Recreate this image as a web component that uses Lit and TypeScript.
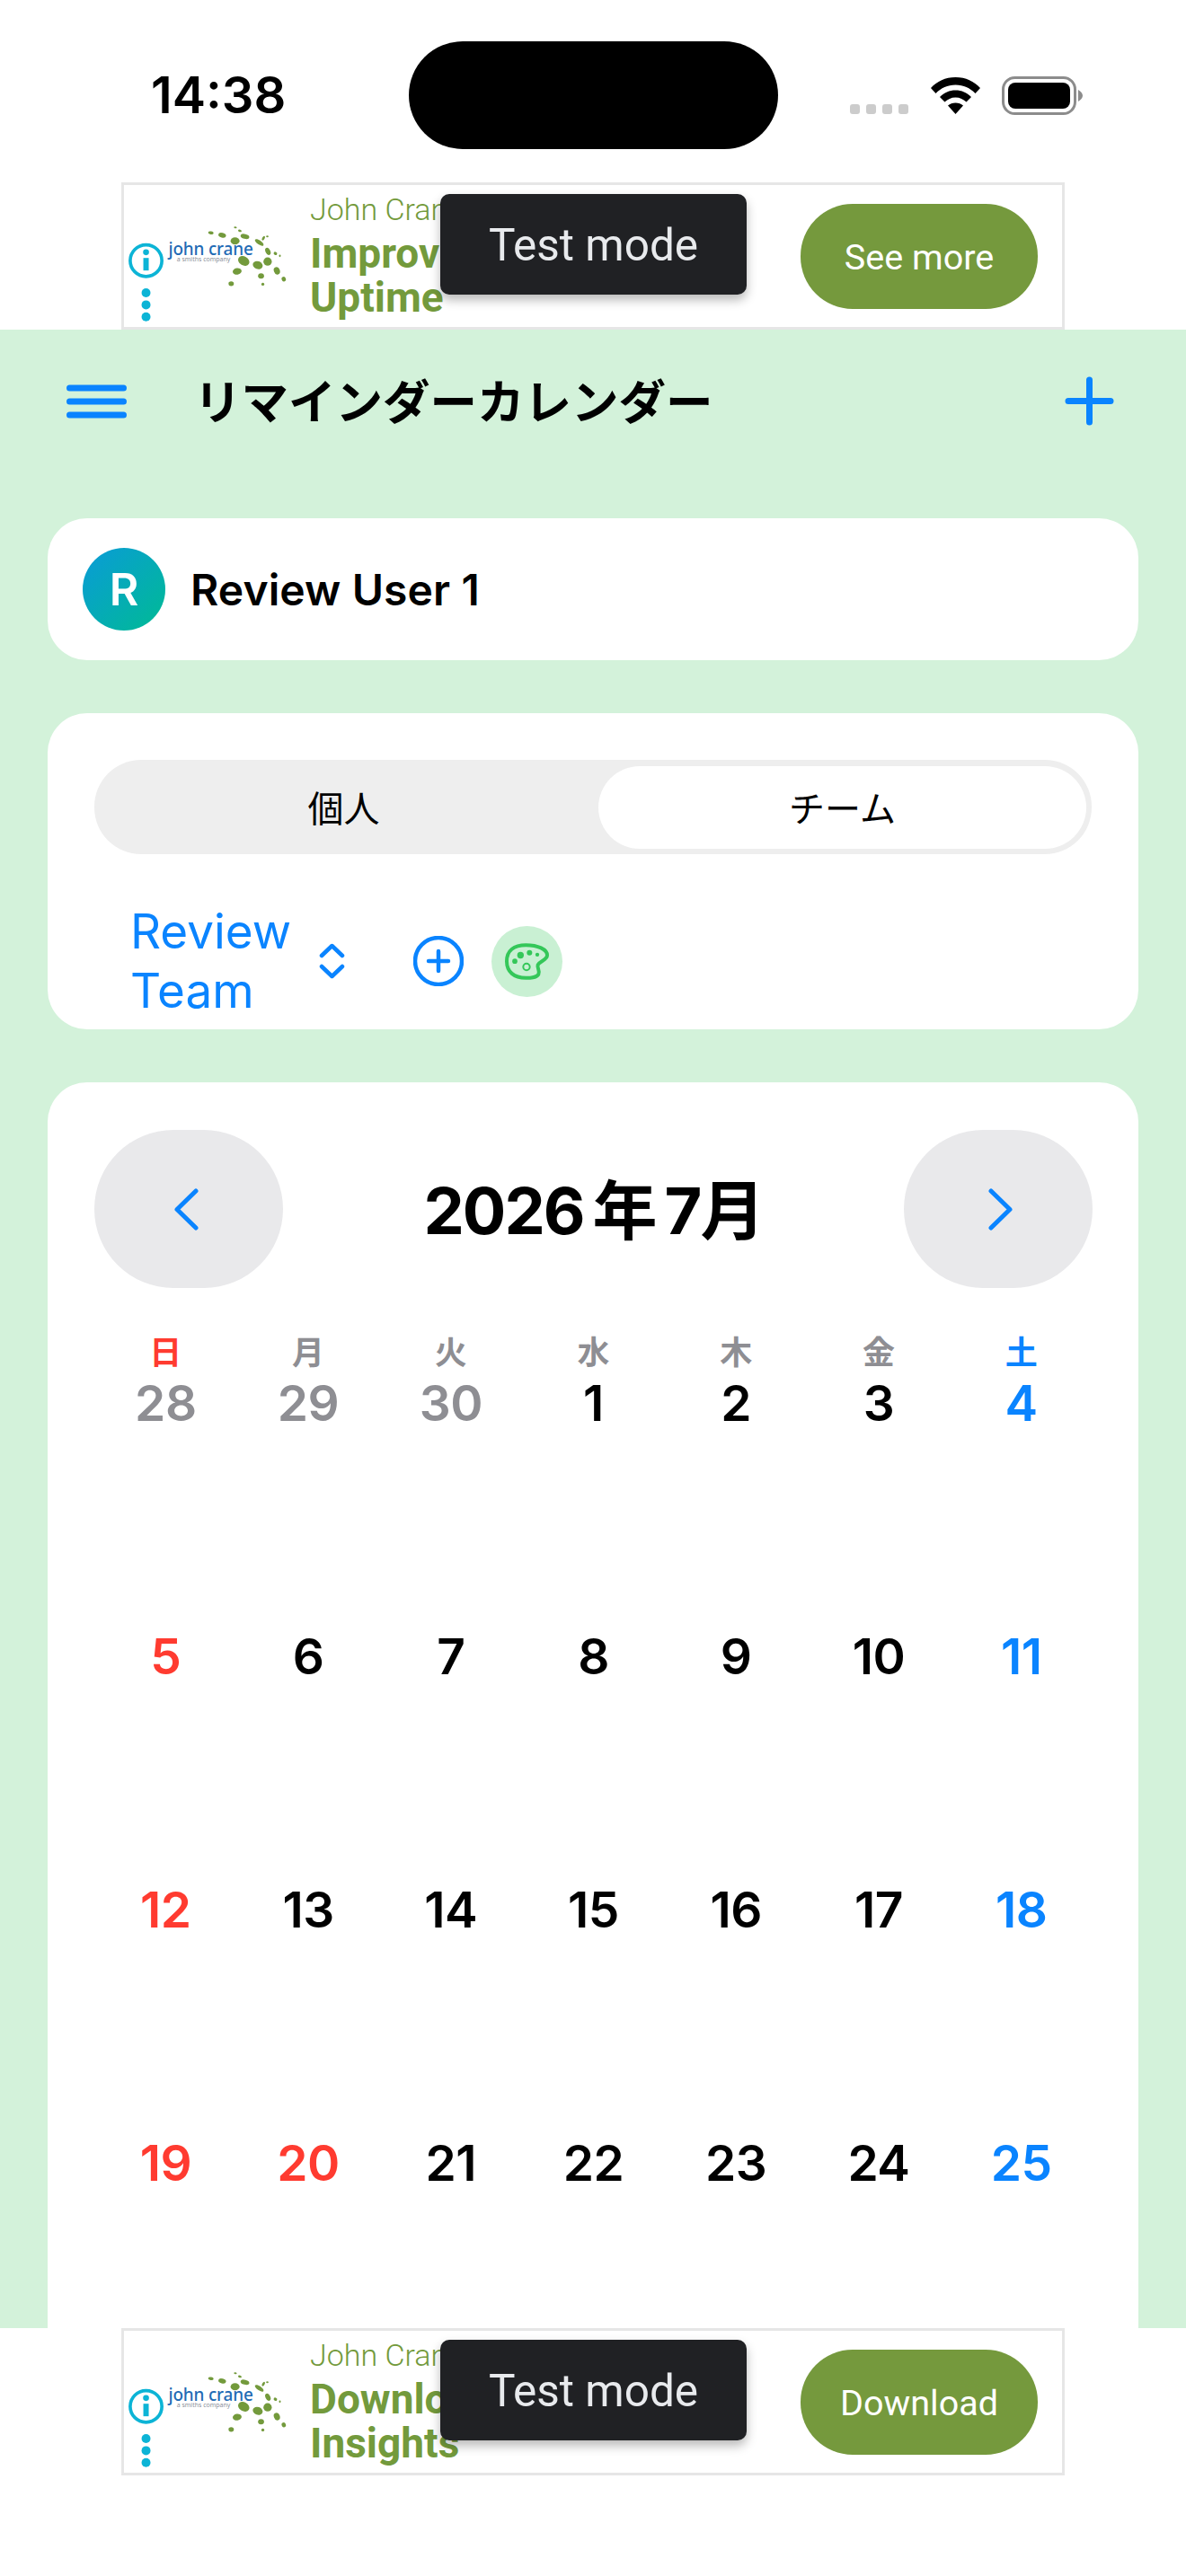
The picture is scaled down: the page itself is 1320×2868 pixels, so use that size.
import { LitElement, html, css, svg } from "lit";
import { customElement } from "lit/decorators.js";

const SPOTS: number[][] = [
  [314,88,9,5,10],[352,96,13,8,15],[395,115,15,12,0],[428,100,15,8,15],[396,70,5,3,10],[411,81,6,4,15],
  [476,120,17,7,35],[490,106,4,8,30],[503,100,4,3,0],[505,150,8,13,-25],[530,157,6,5,30],[545,165,3,4,0],
  [424,182,20,15,30],[471,196,17,13,20],[504,184,14,14,0],[535,215,10,13,-20],[402,217,15,11,-10],
  [482,232,10,9,0],[558,243,7,8,-20],[382,258,9,8,0],[488,260,5,5,0],
];

const logo = html`<svg class="logo" viewBox="24 0 624 400" aria-hidden="true">
  <circle cx="97" cy="181" r="53" fill="none" stroke="#0cb4d6" stroke-width="11"/>
  <circle cx="97" cy="153" r="10" fill="#0cb4d6"/>
  <rect x="88" y="172" width="18" height="42" fill="#0cb4d6"/>
  <circle cx="97" cy="289" r="15" fill="#0cb4d6"/>
  <circle cx="97" cy="329" r="15" fill="#0cb4d6"/>
  <circle cx="97" cy="369" r="15" fill="#0cb4d6"/>
  ${SPOTS.map(([x,y,rx,ry,r]) => svg`<ellipse cx=${x} cy=${y} rx=${rx} ry=${ry} fill="#739a3c" transform="rotate(${r} ${x} ${y})"/>`)}
  <text x="172" y="163" class="jc">john crane</text>
  <text x="200" y="184" class="smiths">a smiths company</text>
</svg>`;

@customElement("ad-banner")
class AdBanner extends LitElement {
  static properties = { b: {}, cta: {} };
  b = ""; cta = "";
  static styles = css`
    :host { display: block; width: 1050px; height: 164px; margin: 0 auto; position: relative; box-sizing: border-box; border: 3px solid #e6e6e6; background: #fff; font-family: Roboto, sans-serif; }
    .row { display: flex; height: 100%; }
    .logo { width: 208px; height: 133px; margin-top: 24px; flex: none; }
    .jc { font: 500 57px "Noto Sans", sans-serif; fill: #1f6bb5; letter-spacing: -0.5px; }
    .smiths { font: 400 21px "Noto Sans", sans-serif; fill: #8a8f99; }
    .copy { flex: none; width: 300px; margin-left: -1px; padding-top: 7px; color: #739a3c; }
    .brand { font-weight: 300; font-size: 34px; line-height: 40px; }
    .head { font-weight: 700; font-size: 46px; line-height: 49px; margin-top: 5px; width: 200px; }
    .cta { position: absolute; left: 753px; top: 21px; width: 264px; height: 117px; padding-top: 2px; box-sizing: border-box; border-radius: 58px; background: #75993d; color: #fff; display: flex; align-items: center; justify-content: center; font-size: 39.5px; }
    .test { position: absolute; left: 352px; top: 10px; width: 341px; height: 112px; padding-top: 2px; box-sizing: border-box; border-radius: 10px; background: #202124; color: #e8eaed; display: flex; align-items: center; justify-content: center; font-size: 49.5px; box-shadow: 0 6px 12px rgba(0,0,0,.28); }
  `;
  render() {
    return html`<div class="row">
      ${logo}
      <div class="copy"><div class="brand">John Crane</div><div class="head">${this.b}</div></div>
    </div>
    <div class="cta">${this.cta}</div>
    <div class="test">Test mode</div>`;
  }
}

type Tone = "" | "red" | "blue" | "grey";

@customElement("app-root")
class AppRoot extends LitElement {
  static styles = css`
    :host { display: flex; flex-direction: column; width: 1320px; height: 2868px; background: #fff; font-family: Inter, "Noto Sans CJK JP", sans-serif; color: #000; overflow: hidden; }
    .status { flex: none; height: 203px; box-sizing: border-box; padding: 46px 0 0 168px; display: flex; }
    .time { width: 287px; height: 120px; line-height: 120px; font-size: 56px; font-weight: 600; }
    .island { width: 411px; height: 120px; border-radius: 60px; background: #000; }
    .sys { margin-left: 80px; height: 43px; margin-top: 39px; display: flex; align-items: flex-end; }
    .dots { display: flex; gap: 7px; margin-bottom: 1px; }
    .dots i { width: 11px; height: 11px; border-radius: 3px; background: #ccc; }
    .wifi { width: 55px; height: 41px; margin-left: 25px; margin-bottom: 1px; }
    .batt { width: 90px; height: 43px; margin-left: 24px; }
    main { flex: 1; min-height: 0; overflow: hidden; background: #d3f2da; }
    header { height: 210px; box-sizing: border-box; padding: 0 80px 0 74px; display: flex; align-items: flex-start; }
    .menu { width: 67px; height: 40px; margin-top: 60px; flex: none; }
    h1 { margin: 47px 0 0 75px; font-size: 52.5px; line-height: 60px; font-weight: 700; font-family: "Noto Sans CJK JP", sans-serif; flex: 1; white-space: nowrap; }
    .plus { width: 55px; height: 55px; margin-top: 52px; flex: none; }
    .card { margin: 0 53px 59px; background: #fff; border-radius: 44px; }
    .user { height: 158px; box-sizing: border-box; padding-left: 39px; display: flex; align-items: center; gap: 28px; }
    .avatar { width: 92px; height: 92px; border-radius: 50%; background: linear-gradient(135deg, #0a9bd8, #00bb94); color: #fff; font-size: 50px; font-weight: 600; display: flex; align-items: center; justify-content: center; }
    .uname { font-size: 48px; font-weight: 600; letter-spacing: 0.1px; }
    .team { height: 352px; box-sizing: border-box; padding: 52px 52px 0; }
    .seg { height: 105px; box-sizing: border-box; border-radius: 52px; background: #eee; padding: 7px 6px 6px 0; display: grid; grid-template-columns: 555px 543px; gap: 6px; }
    .seg div { display: flex; align-items: center; justify-content: center; font-size: 40px; padding-bottom: 2px; box-sizing: border-box; border-radius: 46px; font-family: "Noto Sans CJK JP", sans-serif; }
    .seg .on { background: #fff; }
    .trow { display: flex; align-items: center; margin-top: 53px; padding-left: 40px; }
    .tname { width: 210px; font-size: 53px; line-height: 66px; color: #0a84ff; flex: none; }
    .updown { width: 29px; height: 40px; flex: none; }
    .addc { width: 56px; height: 56px; margin-left: 76px; flex: none; }
    .pal { width: 79px; height: 79px; margin-left: 31px; border-radius: 50%; background: #c9f0d3; display: flex; align-items: center; justify-content: center; flex: none; }
    .pal svg { width: 49px; height: 41px; }
    .cal { padding: 53px 51px 0 52px; margin-bottom: 0; height: 1500px; box-sizing: border-box; }
    .nav { display: flex; justify-content: space-between; align-items: center; }
    .nb { width: 210px; height: 176px; border-radius: 88px; background: #e9e9eb; display: flex; align-items: center; justify-content: center; }
    .nb svg { width: 27px; height: 47px; }
    .nb .l { margin-right: 5px; }
    .nb .r { margin-left: 5px; }
    .ttl { font-size: 72px; font-weight: 700; letter-spacing: -2px; word-spacing: -5px; line-height: 80px; padding-top: 4px; }
    .wk, .wks { display: grid; grid-template-columns: repeat(7, 1fr); text-align: center; }
    .wk { margin-top: 49px; font-size: 36px; line-height: 40px; font-weight: 700; font-family: "Noto Sans CJK JP", sans-serif; }
    .wks { margin-top: 9px; grid-auto-rows: 282px; font-size: 55px; line-height: 60px; font-weight: 600; letter-spacing: -0.5px; }
    .grey { color: #8e8e93; } .red { color: #ff3b30; } .blue { color: #0a84ff; }
    .foot { flex: none; height: 276px; background: #fff; }
  `;

  tone(i: number, d: number, out: boolean): Tone {
    if (out) return "grey";
    if (i % 7 === 0 || d === 20) return "red";
    if (i % 7 === 6) return "blue";
    return "";
  }

  render() {
    const days = [28, 29, 30, ...Array.from({ length: 25 }, (_, i) => i + 1)];
    const heads = ["日", "月", "火", "水", "木", "金", "土"];
    return html`
      <div class="status">
        <div class="time">14:38</div>
        <div class="island"></div>
        <div class="sys">
          <div class="dots"><i></i><i></i><i></i><i></i></div>
          <svg class="wifi" viewBox="0 0 55 41"><path fill="#000" d="M27.5 0C39 0 48 4.500 55 12L49.500 18C43.500 12 36.500 8.500 27.500 8.500S11.500 12 5.500 18L0 12C7 4.500 16 0 27.500 0Z"/><path fill="#000" d="M27.500 14.500C34.500 14.500 40 17 45 22L39.500 27.500C36 24.500 32.500 22.500 27.500 22.500S19 24.500 15.500 27.500L10 22C15 17 20.500 14.500 27.500 14.500Z"/><path fill="#000" d="M27.500 28.500C31 28.500 33.500 29.500 36 31.500L27.500 41L19 31.500C21.500 29.500 24 28.500 27.500 28.500Z"/></svg>
          <svg class="batt" viewBox="0 0 90 43"><rect x="1.500" y="1.500" width="80" height="40" rx="13" fill="none" stroke="#8c8c8c" stroke-width="3"/><rect x="7" y="7" width="69" height="29" rx="8" fill="#000"/><path d="M85 15C88 17 90 19 90 21.500S88 26 85 28Z" fill="#8c8c8c"/></svg>
        </div>
      </div>
      <ad-banner b="Improve Uptime" cta="See more"></ad-banner>
      <main>
        <header>
          <svg class="menu" viewBox="0 0 67 40"><path d="M3.500 5H63.500M3.500 20H63.500M3.500 35H63.500" stroke="#0a84ff" stroke-width="7" stroke-linecap="round" fill="none"/></svg>
          <h1>リマインダーカレンダー</h1>
          <svg class="plus" viewBox="0 0 55 55"><path d="M27.500 4V51M4 27.500H51" stroke="#0a84ff" stroke-width="7" stroke-linecap="round" fill="none"/></svg>
        </header>
        <section class="card user"><div class="avatar">R</div><div class="uname">Review User 1</div></section>
        <section class="card team">
          <div class="seg"><div>個人</div><div class="on">チーム</div></div>
          <div class="trow">
            <div class="tname">Review Team</div>
            <svg class="updown" viewBox="0 0 29 40"><path d="M3 14L14.500 3L26 14M3 26L14.500 37L26 26" stroke="#0a84ff" stroke-width="4.500" stroke-linecap="round" stroke-linejoin="round" fill="none"/></svg>
            <svg class="addc" viewBox="0 0 56 56"><circle cx="28" cy="28" r="26" stroke="#0a84ff" stroke-width="4.500" fill="none"/><path d="M28 17V39M17 28H39" stroke="#0a84ff" stroke-width="4.500" stroke-linecap="round" fill="none"/></svg>
            <div class="pal"><svg viewBox="0 0 147 122"><path d="M70 6C110 6 141 20 141 40C141 56 118 58 110 72C106 84 118 90 112 104C104 116 85 116 70 116C30 116 6 95 6 60C6 25 30 6 70 6Z" fill="none" stroke="#34c759" stroke-width="12"/><circle cx="52" cy="40" r="11" fill="#34c759"/><circle cx="82" cy="32" r="9" fill="#34c759"/><circle cx="108" cy="38" r="6.500" fill="#34c759"/><circle cx="33" cy="60" r="8.500" fill="#34c759"/><circle cx="72" cy="79" r="11" fill="none" stroke="#34c759" stroke-width="6"/></svg></div>
          </div>
        </section>
        <section class="card cal">
          <div class="nav">
            <div class="nb"><svg class="l" viewBox="0 0 27 47"><path d="M24 3L3 23.500L24 44" fill="none" stroke="#0a84ff" stroke-width="5" stroke-linecap="round" stroke-linejoin="round"/></svg></div>
            <div class="ttl">2026 年 7月</div>
            <div class="nb"><svg class="r" viewBox="0 0 27 47"><path d="M3 3L24 23.500L3 44" fill="none" stroke="#0a84ff" stroke-width="5" stroke-linecap="round" stroke-linejoin="round"/></svg></div>
          </div>
          <div class="wk">${heads.map((h, i) => html`<div class=${i === 0 ? "red" : i === 6 ? "blue" : "grey"}>${h}</div>`)}</div>
          <div class="wks">${days.map((d, i) => html`<div class=${this.tone(i, d, i < 3)}>${d}</div>`)}</div>
        </section>
      </main>
      <div class="foot"><ad-banner b="Download Insights" cta="Download"></ad-banner></div>
    `;
  }
}
